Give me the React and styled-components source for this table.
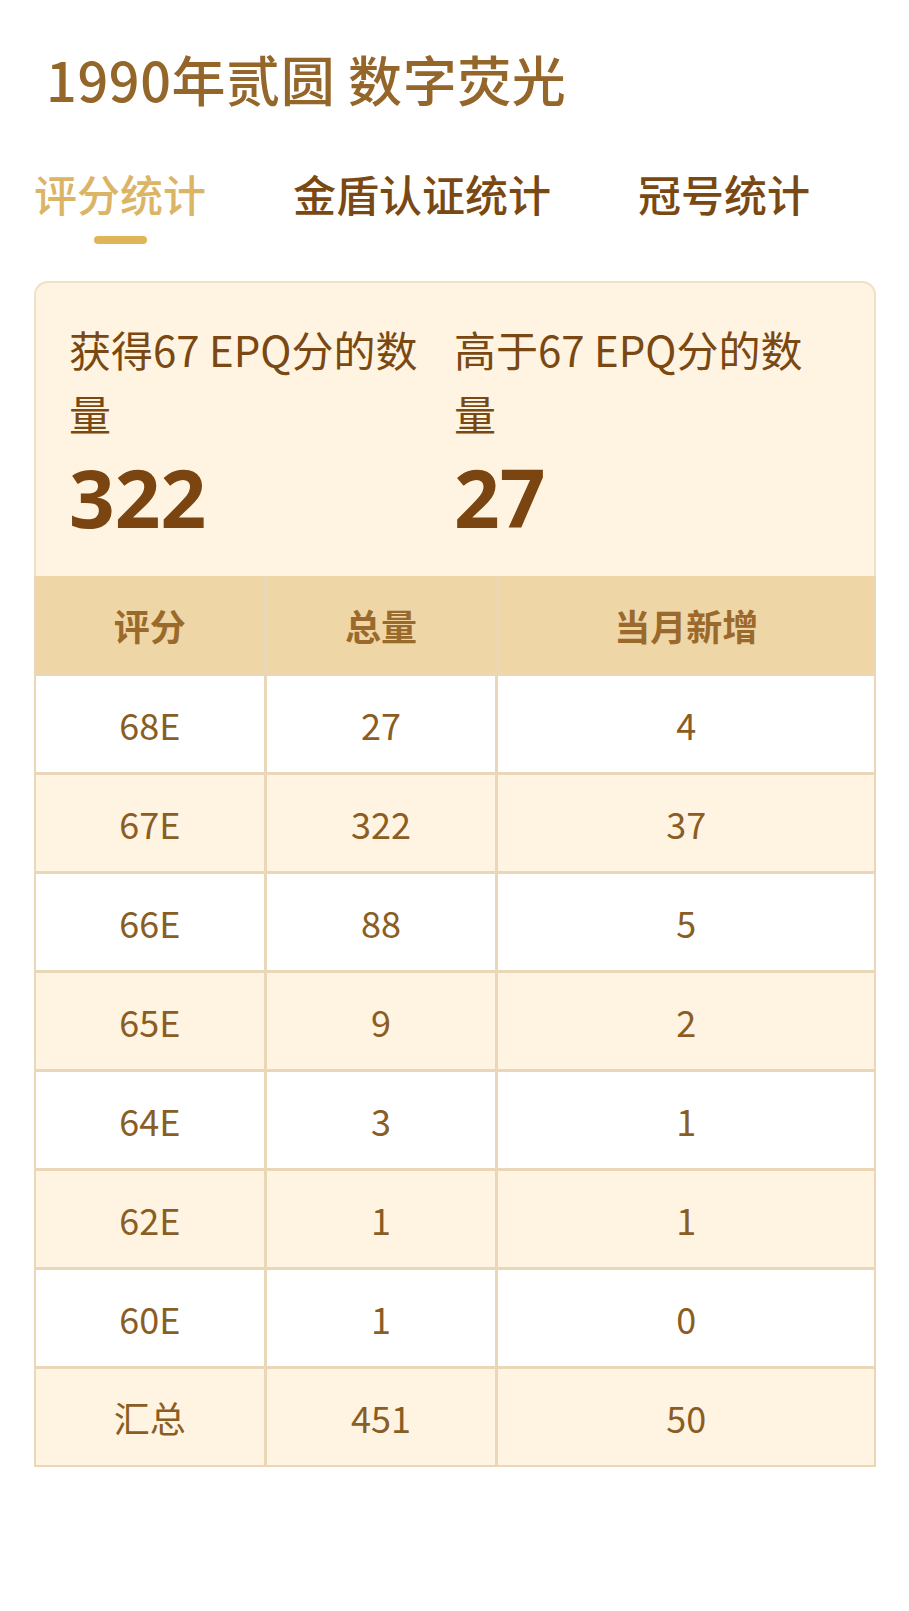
import React from "react";
import styled, { createGlobalStyle } from "styled-components";

const Global = createGlobalStyle`
  html, body { margin: 0; padding: 0; background: #ffffff; }
  body { font-family: "Noto Sans CJK SC", "Noto Sans", sans-serif; }
  * { box-sizing: border-box; }
`;

const Page = styled.div`
  width: 909px;
  min-height: 1611px;
  padding: 44px 33px 0 34px;
  background: #ffffff;
`;

const Title = styled.h1`
  margin: 0 0 0 12px;
  font-size: 54px;
  line-height: 70px;
  letter-spacing: 0.6px;
  font-weight: 500;
  color: #94662a;
`;

const Tabs = styled.div`
  display: flex;
  gap: 87px;
  margin-top: 50px;
  padding-left: 0;
`;

const Tab = styled.div`
  display: flex;
  flex-direction: column;
  align-items: center;
  font-size: 43px;
  line-height: 58px;
  font-weight: 500;
  color: ${(p) => (p.$active ? "#dcb466" : "#7a4812")};
`;

const Indicator = styled.div`
  width: 53px;
  height: 8px;
  border-radius: 4px;
  margin-top: 14px;
  background: ${(p) => (p.$active ? "#e0b55a" : "transparent")};
`;

const Card = styled.div`
  margin-top: 37px;
`;

const Stats = styled.div`
  display: grid;
  grid-template-columns: 1fr 1fr;
  padding: 34px 35px 29px 33px;
  background: #fff4e1;
  border: 2px solid #f0e1c6;
  border-bottom: none;
  border-radius: 14px 14px 0 0;
`;

const Stat = styled.div`
  display: flex;
  flex-direction: column;
`;

const StatLabel = styled.div`
  max-width: 372px;
  font-size: 42px;
  line-height: 64px;
  color: #7a4812;
`;

const StatValue = styled.div`
  font-family: "Noto Sans", sans-serif;
  font-size: 80px;
  line-height: 100px;
  font-weight: 700;
  color: #7a4510;
  margin-top: 2px;
`;

const Table = styled.div`
  display: grid;
  grid-template-columns: 231fr 232fr 381fr;
  gap: 3px;
  background: #ead7b8;
  border: 2px solid #ead7b8;
  border-top: none;
`;

const Cell = styled.div`
  display: flex;
  align-items: center;
  justify-content: center;
  height: ${(p) => (p.$head ? "97px" : "96px")};
  font-size: 36px;
  font-weight: ${(p) => (p.$head ? 700 : 400)};
  color: ${(p) => (p.$head ? "#9a6a2c" : "#8a5d24")};
  background: ${(p) => (p.$head ? "#efd6a7" : p.$alt ? "#fff4e1" : "#ffffff")};
`;

const rows = [
  ["68E", "27", "4"],
  ["67E", "322", "37"],
  ["66E", "88", "5"],
  ["65E", "9", "2"],
  ["64E", "3", "1"],
  ["62E", "1", "1"],
  ["60E", "1", "0"],
  ["汇总", "451", "50"],
];

const tabs = ["评分统计", "金盾认证统计", "冠号统计"];

export default function App() {
  return (
    <>
      <Global />
      <Page>
        <Title>1990年贰圆 数字荧光</Title>
        <Tabs>
          {tabs.map((t, i) => (
            <Tab key={t} $active={i === 0}>
              {t}
              <Indicator $active={i === 0} />
            </Tab>
          ))}
        </Tabs>
        <Card>
          <Stats>
            <Stat>
              <StatLabel>获得67 EPQ分的数量</StatLabel>
              <StatValue>322</StatValue>
            </Stat>
            <Stat>
              <StatLabel>高于67 EPQ分的数量</StatLabel>
              <StatValue>27</StatValue>
            </Stat>
          </Stats>
          <Table>
            <Cell $head>评分</Cell>
            <Cell $head>总量</Cell>
            <Cell $head>当月新增</Cell>
            {rows.map((r, i) =>
              r.map((v, j) => (
                <Cell key={`${i}-${j}`} $alt={i % 2 === 1}>
                  {v}
                </Cell>
              ))
            )}
          </Table>
        </Card>
      </Page>
    </>
  );
}
